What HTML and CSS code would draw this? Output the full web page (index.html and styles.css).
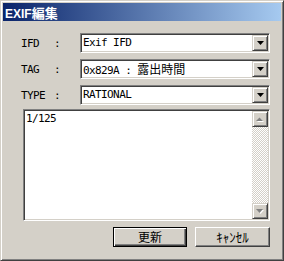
FILE: index.html
```html
<!DOCTYPE html>
<html lang="ja">
<head>
<meta charset="UTF-8">
<title>EXIF編集</title>
<link rel="stylesheet" href="styles.css">
</head>
<body>

<div class="window">
    <!-- Title bar -->
    <div class="titlebar">
        <span class="title">EXIF<span class="cjk">編集</span></span>
    </div>

    <div class="dialog">
        <!-- IFD / TAG / TYPE selectors -->
        <div class="fields">
            <span class="field-label">IFD</span>
            <span class="colon">:</span>
            <div class="combo">
                <span class="combo-text">Exif IFD</span>
                <span class="drop-btn"><svg width="7" height="4" viewBox="0 0 7 4"><path d="M0 0h7L3.5 4z" fill="#000"/></svg></span>
            </div>

            <span class="field-label">TAG</span>
            <span class="colon">:</span>
            <div class="combo">
                <span class="combo-text">0x829A : <span class="cjk">露出時間</span></span>
                <span class="drop-btn"><svg width="7" height="4" viewBox="0 0 7 4"><path d="M0 0h7L3.5 4z" fill="#000"/></svg></span>
            </div>

            <span class="field-label">TYPE</span>
            <span class="colon">:</span>
            <div class="combo">
                <span class="combo-text">RATIONAL</span>
                <span class="drop-btn"><svg width="7" height="4" viewBox="0 0 7 4"><path d="M0 0h7L3.5 4z" fill="#000"/></svg></span>
            </div>
        </div>

        <!-- Value memo -->
        <div class="memo">
            <div class="memo-text">1/125</div>
            <div class="scrollbar">
                <span class="scroll-btn"><svg width="8" height="5" viewBox="0 0 8 5"><path d="M1 5h7L4.5 1.5z" fill="#fff"/><path d="M0 4h7L3.5 0.5z" fill="#808080"/></svg></span>
                <span class="scroll-track"></span>
                <span class="scroll-btn"><svg width="8" height="5" viewBox="0 0 8 5"><path d="M1 1h7L4.5 5z" fill="#fff"/><path d="M0 0h7L3.5 4z" fill="#808080"/></svg></span>
            </div>
        </div>

        <!-- Buttons -->
        <div class="buttons">
            <button class="btn btn-default">更新</button>
            <button class="btn btn-kana">ｷｬﾝｾﾙ</button>
        </div>
    </div>
</div>

</body>
</html>
```

FILE: styles.css
```css
/* Base */
body {
    margin: 0;
    background-color: #d4d0c8;
    font-family: "DejaVu Sans Mono", "Noto Sans CJK JP", monospace;
    font-size: 11px;
    color: #000;
}

.cjk {
    font-family: "Noto Sans CJK JP", sans-serif;
    font-size: 12px;
    letter-spacing: 0;
}

/* Window frame */
.window {
    width: 284px;
    height: 261px;
    box-sizing: border-box;
    border: 1px solid;
    border-color: #d4d0c8 #404040 #404040 #d4d0c8;
    box-shadow: inset 1px 1px #fff, inset -1px -1px #808080;
    padding: 2px;
    display: flex;
    flex-direction: column;
}

/* Title bar */
.titlebar {
    height: 18px;
    background: linear-gradient(to right, #0a246a, #a6caf0);
    display: flex;
    align-items: center;
    padding-left: 2px;
}

.title {
    color: #fff;
    font-family: "Liberation Sans", "Noto Sans CJK JP", sans-serif;
    font-weight: bold;
    font-size: 12px;
    letter-spacing: 0;
}

.title .cjk {
    font-weight: bold;
    font-size: 13px;
}

/* Dialog body */
.dialog {
    padding: 12px 11px 0 18px;
}

.fields {
    display: grid;
    grid-template-columns: 33px 26px 1fr;
    grid-auto-rows: 20px;
    row-gap: 6px;
    align-items: center;
}

.field-label,
.colon,
.combo-text,
.memo-text {
    letter-spacing: -0.6px;
}

.combo {
    height: 20px;
    box-sizing: border-box;
    display: flex;
    align-items: stretch;
    background-color: #fff;
    border: 1px solid;
    border-color: #808080 #fff #fff #808080;
    box-shadow: inset 1px 1px #404040, inset -1px -1px #d4d0c8;
    padding: 1px;
}

.combo-text {
    flex: 1;
    padding-left: 1px;
    line-height: 16px;
    white-space: nowrap;
}

.drop-btn,
.scroll-btn {
    width: 16px;
    height: 16px;
    box-sizing: border-box;
    background-color: #d4d0c8;
    border: 1px solid;
    border-color: #d4d0c8 #404040 #404040 #d4d0c8;
    box-shadow: inset 1px 1px #fff, inset -1px -1px #808080;
    display: flex;
    align-items: center;
    justify-content: center;
}

/* Memo box */
.memo {
    margin: 4px 0 0 2px;
    height: 112px;
    box-sizing: border-box;
    display: flex;
    background-color: #fff;
    border: 1px solid;
    border-color: #808080 #fff #fff #808080;
    box-shadow: inset 1px 1px #404040, inset -1px -1px #d4d0c8;
    padding: 1px;
}

.memo-text {
    flex: 1;
    padding: 1px 0 0 1px;
    line-height: 13px;
}

.scrollbar {
    width: 16px;
    display: flex;
    flex-direction: column;
}

.scroll-track {
    flex: 1;
    background: repeating-conic-gradient(#fff 0 25%, #d4d0c8 0 50%) 0 0 / 2px 2px;
}

/* Buttons */
.buttons {
    display: flex;
    justify-content: flex-end;
    gap: 8px;
    margin-top: 6px;
}

.btn {
    height: 20px;
    padding: 0;
    background-color: #d4d0c8;
    border: 1px solid;
    border-color: #fff #404040 #404040 #fff;
    box-shadow: inset -1px -1px #808080;
    font-family: "Noto Sans CJK JP", sans-serif;
    font-size: 12px;
    line-height: 16px;
    color: #000;
    width: 75px;
}

.btn-kana {
    font-size: 13px;
}

.btn-default {
    width: 74px;
    border-color: #000;
    box-shadow: inset 1px 1px #fff, inset -1px -1px #404040, inset -2px -2px #808080;
}
```
